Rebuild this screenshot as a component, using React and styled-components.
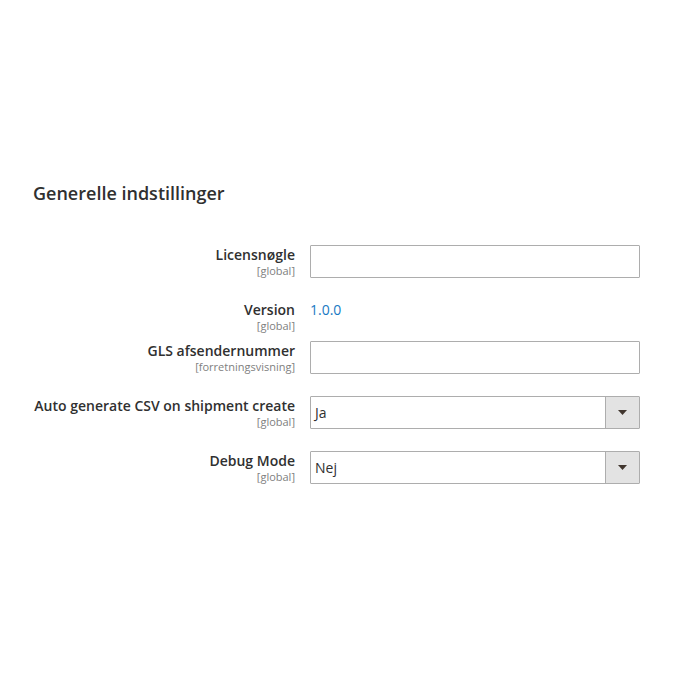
import React from "react";
import styled, { createGlobalStyle } from "styled-components";

const Global = createGlobalStyle`
  html, body { margin: 0; padding: 0; background: #fff; }
  body { font-family: "Open Sans", "Liberation Sans", sans-serif; color: #303030; }
`;

const Page = styled.div`
  width: 700px;
  height: 700px;
  padding-top: 181px;
  box-sizing: border-box;
`;

const Title = styled.h2`
  margin: 0 0 40px 33px;
  font-size: 18px;
  line-height: 24px;
  font-weight: 600;
  color: #303030;
`;

const Form = styled.div`
  display: flex;
  flex-direction: column;
`;

const Row = styled.div`
  display: grid;
  grid-template-columns: 295px 330px;
  column-gap: 15px;
  align-items: start;
  margin-bottom: 22px;
`;

const LabelCol = styled.div`
  text-align: right;
  display: flex;
  flex-direction: column;
  align-items: flex-end;
`;

const Label = styled.span`
  font-size: 14px;
  line-height: 19px;
  font-weight: 600;
  color: #303030;
  white-space: nowrap;
`;

const Scope = styled.span`
  font-size: 11px;
  line-height: 13px;
  color: #808080;
  margin-bottom: -13px;
  white-space: nowrap;
`;

const Control = styled.div`
  display: flex;
  align-items: flex-start;
`;

const TextInput = styled.input`
  box-sizing: border-box;
  width: 330px;
  height: 33px;
  border: 1px solid #adadad;
  border-radius: 1px;
  background: #fff;
  padding: 0 9px;
  font-family: inherit;
  font-size: 14px;
  outline: none;
`;

const Value = styled.span`
  font-size: 14px;
  line-height: 19px;
  color: #1979c3;
`;

const Select = styled.div`
  box-sizing: border-box;
  width: 330px;
  height: 33px;
  border: 1px solid #adadad;
  border-radius: 1px;
  background: #fff;
  display: flex;
  align-items: stretch;
`;

const SelectText = styled.span`
  flex: 1;
  display: flex;
  align-items: center;
  padding-left: 4px;
  font-size: 14px;
  color: #303030;
`;

const SelectButton = styled.span`
  width: 33px;
  border-left: 1px solid #adadad;
  background: #e3e3e3;
  display: flex;
  align-items: center;
  justify-content: center;
`;

const Arrow = () => (
  <svg width="9" height="5" viewBox="0 0 9 5">
    <polygon points="0,0 9,0 4.5,5" fill="#41362f" />
  </svg>
);

const Field = ({ label, scope, children }) => (
  <Row>
    <LabelCol>
      <Label>{label}</Label>
      <Scope>{scope}</Scope>
    </LabelCol>
    <Control>{children}</Control>
  </Row>
);

export default function App() {
  return (
    <Page>
      <Global />
      <Title>Generelle indstillinger</Title>
      <Form>
        <Field label="Licensnøgle" scope="[global]">
          <TextInput type="text" />
        </Field>
        <Field label="Version" scope="[global]">
          <Value>1.0.0</Value>
        </Field>
        <Field label="GLS afsendernummer" scope="[forretningsvisning]">
          <TextInput type="text" />
        </Field>
        <Field label="Auto generate CSV on shipment create" scope="[global]">
          <Select>
            <SelectText>Ja</SelectText>
            <SelectButton><Arrow /></SelectButton>
          </Select>
        </Field>
        <Field label="Debug Mode" scope="[global]">
          <Select>
            <SelectText>Nej</SelectText>
            <SelectButton><Arrow /></SelectButton>
          </Select>
        </Field>
      </Form>
    </Page>
  );
}
